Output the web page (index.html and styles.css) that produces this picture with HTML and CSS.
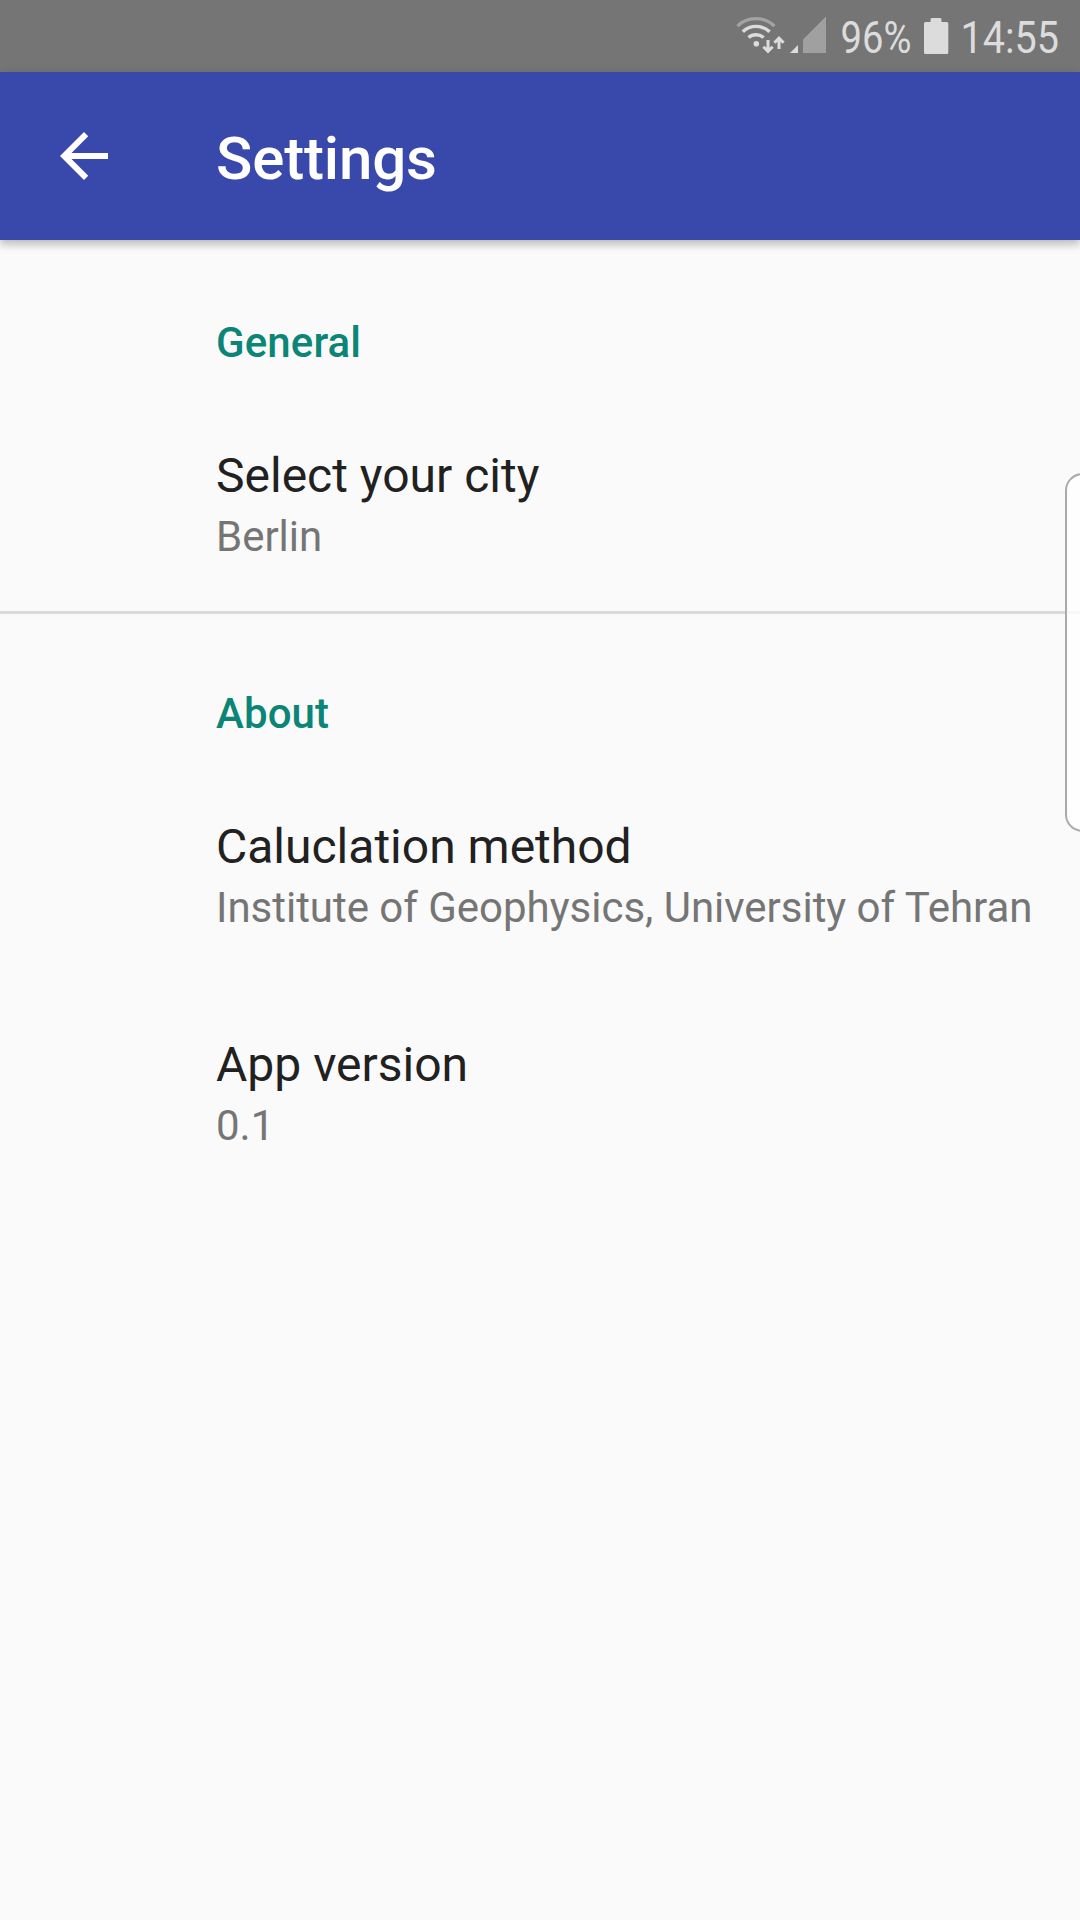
FILE: index.html
```html
<!DOCTYPE html>
<html lang="en">
<head>
<meta charset="utf-8">
<title>Settings</title>
<link rel="stylesheet" href="styles.css">
</head>
<body>
<div class="status-bar">
  <svg class="status-wifi" width="52" height="72" viewBox="0 0 52 72" fill="none" stroke="#dcdcdc">
    <path d="M1.5 26.2C11 16.2 29 16.2 38.5 26.2" stroke="#a3a3a3" stroke-width="3.2"/>
    <path d="M6.800 31.800C14 24.600 26 24.600 33.600 31.800" stroke-width="3.400"/>
    <path d="M12.600 37.600C16.600 33.800 23.600 33.800 27.600 37.600" stroke-width="3.400"/>
    <circle cx="20.3" cy="43.8" r="2.8" fill="#dcdcdc" stroke="none"/>
    <path d="M32 40v11M27.400 46.800l4.600 4.600 4.600-4.600" stroke-width="3"/>
    <path d="M43 49V38M38.400 42.800l4.600-4.600 4.600 4.600" stroke-width="3"/>
  </svg>
  <svg class="status-signal" width="38" height="72" viewBox="0 0 38 72">
    <path d="M0 53L8 45V53Z" fill="#dcdcdc"/>
    <path d="M13 53V39.500L36 16.500V53Z" fill="#a0a0a0"/>
  </svg>
  <svg class="status-percent" width="78" height="72" viewBox="0 0 78 72">
    <text class="status-text" x="3.5" y="53" textLength="71" lengthAdjust="spacingAndGlyphs">96%</text>
  </svg>
  <svg class="status-battery" width="25" height="72" viewBox="0 0 25 72">
    <path d="M0 23.500q0-1.500 1.500-1.500H6.500V19.500q0-1.500 1.500-1.500h8q1.500 0 1.500 1.500V22H22.800q1.500 0 1.500 1.500V52.500q0 1.500-1.500 1.500H1.500q-1.500 0-1.500-1.500Z" fill="#dcdcdc"/>
  </svg>
  <svg class="status-clock" width="104" height="72" viewBox="0 0 104 72">
    <text class="status-text" x="2.5" y="53" textLength="98.500" lengthAdjust="spacingAndGlyphs">14:55</text>
  </svg>
</div>
<header class="app-bar">
  <svg class="back" width="72" height="72" viewBox="0 0 24 24" fill="#fff">
    <path d="M20 11H7.830l5.590-5.590L12 4l-8 8 8 8 1.410-1.410L7.830 13H20v-2z"/>
  </svg>
  <h1 class="app-title">Settings</h1>
</header>
<main class="preferences">
  <section class="category">
    <h2 class="category-title">General</h2>
    <div class="preference">
      <div class="preference-title">Select your city</div>
      <div class="preference-summary">Berlin</div>
    </div>
  </section>
  <section class="category category-divided">
    <h2 class="category-title">About</h2>
    <div class="preference">
      <div class="preference-title">Caluclation method</div>
      <div class="preference-summary">Institute of Geophysics, University of Tehran</div>
    </div>
    <div class="preference">
      <div class="preference-title">App version</div>
      <div class="preference-summary">0.1</div>
    </div>
  </section>
</main>
<div class="edge-handle"></div>
</body>
</html>
```
FILE: styles.css
```css
* {
  box-sizing: border-box;
}

body {
  margin: 0;
  position: relative;
  width: 1080px;
  height: 1920px;
  overflow: hidden;
  background: #fafafa;
  font-family: Roboto, "Liberation Sans", sans-serif;
}

.status-bar {
  display: flex;
  justify-content: flex-end;
  height: 72px;
  padding-right: 18px;
  background: #757575;
}

.status-bar svg {
  flex: none;
  overflow: visible;
}

.status-signal {
  margin-left: 2px;
}

.status-percent,
.status-battery,
.status-clock {
  margin-left: 9px;
}

.status-text {
  font-size: 45px;
  fill: #dcdcdc;
}

.app-bar {
  display: flex;
  align-items: center;
  gap: 96px;
  height: 168px;
  padding-left: 48px;
  background: #3949ab;
  box-shadow: 0 4px 9px rgba(0, 0, 0, 0.28);
}

.app-title {
  margin: 0;
  padding-top: 6px;
  color: #fff;
  font-size: 60px;
  font-weight: 500;
  letter-spacing: -0.15px;
  line-height: 72px;
}

.category {
  padding-top: 78px;
}

.category-divided {
  border-top: 3px solid #dadada;
  padding-top: 75px;
}

.category-title {
  margin: 0;
  padding: 0 0 25px 216px;
  color: #0b8576;
  font-size: 42px;
  font-weight: 500;
  letter-spacing: 0.1px;
  line-height: 50px;
}

.preference {
  display: flex;
  flex-direction: column;
  gap: 8px;
  padding: 55px 0 49px 216px;
  white-space: nowrap;
}

.preference-title {
  color: #212121;
  font-size: 48px;
  line-height: 56px;
}

.preference-summary {
  color: #757575;
  font-size: 42px;
  letter-spacing: -0.02px;
  line-height: 50px;
}

.edge-handle {
  position: absolute;
  top: 473px;
  right: -20px;
  width: 35px;
  height: 359px;
  border: 2px solid #aaa;
  border-radius: 18px;
  background: rgba(255, 255, 255, 0.8);
}
```
